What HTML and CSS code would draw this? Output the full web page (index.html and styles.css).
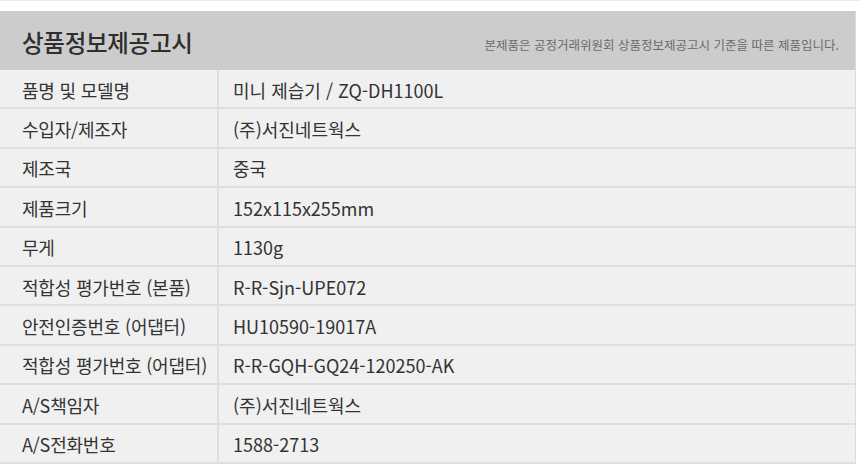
FILE: index.html
```html
<!DOCTYPE html>
<html lang="ko">
<head>
    <meta charset="UTF-8">
    <title>상품정보제공고시</title>
    <link rel="stylesheet" href="styles.css">
</head>
<body>
    <div class="page">
        <!-- 상품정보제공고시 -->
        <div class="notice">
            <div class="notice-head">
                <h2 class="notice-title">상품정보제공고시</h2>
                <p class="notice-desc">본제품은 공정거래위원회 상품정보제공고시 기준을 따른 제품입니다.</p>
            </div>
            <div class="row"><div class="label">품명 및 모델명</div><div class="value">미니 제습기 / ZQ-DH1100L</div></div>
            <div class="row"><div class="label">수입자/제조자</div><div class="value">(주)서진네트웍스</div></div>
            <div class="row"><div class="label">제조국</div><div class="value">중국</div></div>
            <div class="row"><div class="label">제품크기</div><div class="value">152x115x255mm</div></div>
            <div class="row"><div class="label">무게</div><div class="value">1130g</div></div>
            <div class="row"><div class="label">적합성 평가번호 (본품)</div><div class="value">R-R-Sjn-UPE072</div></div>
            <div class="row"><div class="label">안전인증번호 (어댑터)</div><div class="value">HU10590-19017A</div></div>
            <div class="row"><div class="label">적합성 평가번호 (어댑터)</div><div class="value">R-R-GQH-GQ24-120250-AK</div></div>
            <div class="row"><div class="label">A/S책임자</div><div class="value">(주)서진네트웍스</div></div>
            <div class="row"><div class="label">A/S전화번호</div><div class="value">1588-2713</div></div>
        </div>
    </div>
</body>
</html>
```

FILE: styles.css
```css
* {
    margin: 0;
    padding: 0;
    box-sizing: border-box;
}

body {
    background-color: #fff;
    font-family: "Noto Sans CJK KR", "Noto Sans", sans-serif;
    color: #333;
}

.page {
    border-top: 1px solid #ebebeb;
    padding-top: 10px;
}

.notice {
    width: 856px;
    border-right: 1px solid #dadada;
}

.notice-head {
    display: flex;
    align-items: center;
    justify-content: space-between;
    height: 59px;
    padding: 3px 16px 0 22px;
    background-color: #cccccc;
}

.notice-title {
    font-size: 23.5px;
    font-weight: 500;
    color: #2e2e2e;
    letter-spacing: -0.3px;
}

.notice-desc {
    font-size: 12.5px;
    color: #6a6a6a;
    margin-top: 4px;
}

.row {
    display: flex;
    height: 39.4px;
    background-color: #f0f0f0;
    border-bottom: 2px solid #dedede;
}

.label {
    width: 219px;
    padding: 2px 0 0 22px;
    border-right: 2px solid #dedede;
    display: flex;
    align-items: center;
    font-size: 18px;
    letter-spacing: -0.2px;
}

.value {
    flex: 1;
    padding: 2px 0 0 14px;
    display: flex;
    align-items: center;
    font-size: 18px;
}
```
